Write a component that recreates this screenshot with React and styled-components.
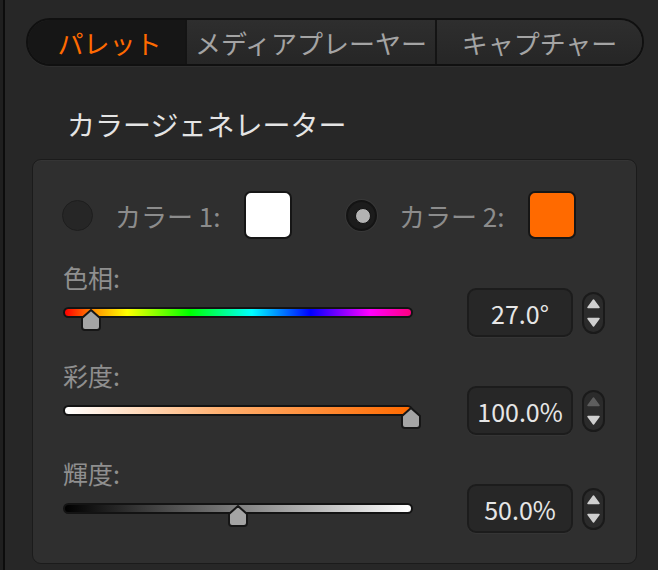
import styled, { createGlobalStyle } from "styled-components";

const GlobalStyle = createGlobalStyle`
  html, body {
    margin: 0;
    padding: 0;
    background: #272727;
  }
  body {
    font-family: "Noto Sans CJK JP", "Noto Sans", sans-serif;
  }
  * {
    box-sizing: border-box;
  }
`;

const Frame = styled.div`
  display: flex;
  width: 658px;
  height: 570px;
  background: #1f1f1f;
  overflow: hidden;
`;

const Main = styled.div`
  flex: 1;
  margin-left: 3px;
  border-left: 2px solid #0c0c0c;
  background: #272727;
  padding: 18px 14px 0 21px;
`;

const TabBar = styled.div`
  display: flex;
  width: 618px;
  height: 48px;
  border: 2px solid #101010;
  border-radius: 24px;
  overflow: hidden;
  box-shadow: 0 1px 0 rgba(255, 255, 255, 0.04);
`;

const Tab = styled.div`
  width: ${({ $w }) => $w}px;
  display: flex;
  align-items: center;
  justify-content: center;
  font-size: 26px;
  color: ${({ $active }) => ($active ? "#ff6a00" : "#a4a4a4")};
  background: ${({ $active }) =>
    $active ? "#161616" : "linear-gradient(#2e2e2e, #262626)"};
  border-left: ${({ $first }) => ($first ? "none" : "2px solid #141414")};
  padding-left: ${({ $first }) => ($first ? "6px" : "0")};
  white-space: nowrap;
`;

const Heading = styled.h2`
  margin: 40px 0 0 41px;
  font-size: 28px;
  font-weight: 400;
  line-height: 36px;
  color: #e4e4e4;
`;

const Panel = styled.div`
  margin: 17px 0 0 6px;
  width: 605px;
  height: 405px;
  border: 1px solid #1b1b1b;
  border-radius: 9px;
  background: #2f2f2f;
  padding: 31px 0 0 30px;
  box-shadow: inset 0 1px 0 rgba(255, 255, 255, 0.03);
`;

const ColorRow = styled.div`
  display: grid;
  grid-template-columns: 284px auto;
  align-items: center;
  height: 48px;
`;

const ColorOption = styled.div`
  display: flex;
  align-items: center;
`;

const Radio = styled.div`
  position: relative;
  width: 31px;
  height: 31px;
  border-radius: 50%;
  margin-left: -1px;
  background: ${({ $checked }) => ($checked ? "#1c1c1c" : "#262626")};
  border: ${({ $checked }) =>
    $checked ? "2px solid #141414" : "1px solid #1e1e1e"};
  box-shadow: ${({ $checked }) =>
    $checked ? "0 0 0 1px #383838" : "none"};

  &::after {
    content: "";
    display: ${({ $checked }) => ($checked ? "block" : "none")};
    position: absolute;
    left: 50%;
    top: 50%;
    width: 14px;
    height: 14px;
    margin: -7px 0 0 -7px;
    border-radius: 50%;
    background: #b3b3b3;
    border: 1px solid #111;
  }
`;

const ColorLabel = styled.span`
  margin-left: 22px;
  font-size: 26px;
  color: #8c8c8c;
  white-space: nowrap;
`;

const Swatch = styled.div`
  margin-left: 24px;
  width: 48px;
  height: 48px;
  border-radius: 7px;
  border: 2px solid #161616;
  background: ${({ $color }) => $color};
`;

const Section = styled.div`
  margin-top: 28px;
`;

const SliderLabel = styled.div`
  font-size: 25px;
  line-height: 21px;
  height: 21px;
  color: #8f8f8f;
`;

const ControlRow = styled.div`
  display: flex;
  align-items: center;
  height: 49px;
`;

const Track = styled.div`
  position: relative;
  width: 350px;
  height: 11px;
  border: 2px solid #131313;
  border-radius: 6px;
  background: ${({ $gradient }) => $gradient};
`;

const Thumb = styled.svg`
  position: absolute;
  top: 0;
  width: 20px;
  height: 22px;
  overflow: visible;
`;

const ValueBox = styled.div`
  margin-left: 54px;
  width: 106px;
  height: 49px;
  border: 2px solid #1c1c1c;
  border-radius: 9px;
  background: #272727;
  display: flex;
  align-items: center;
  justify-content: center;
  font-size: 25px;
  color: #e6e6e6;
  box-shadow: 0 1px 0 rgba(255, 255, 255, 0.03);
`;

const Spinner = styled.div`
  margin-left: 9px;
  width: 23px;
  height: 42px;
  border: 2px solid #1a1a1a;
  border-radius: 12px;
  background: #2b2b2b;
  display: flex;
  align-items: center;
  justify-content: center;
`;

const HUE =
  "linear-gradient(to right, #ff0000 0%, #ff9900 9%, #ffff00 18%, #00ff00 36%, #00ffff 54%, #0000ff 71%, #ff00ff 88%, #ff0080 100%)";
const SAT = "linear-gradient(to right, #ffffff, #ffb070 45%, #ff6a00)";
const LUM = "linear-gradient(to right, #000000, #7f7f7f 50%, #ffffff)";

const sliders = [
  { label: "色相:", value: "27.0°", pct: 27 / 360, gradient: HUE, upOff: false },
  { label: "彩度:", value: "100.0%", pct: 1, gradient: SAT, upOff: true },
  { label: "輝度:", value: "50.0%", pct: 0.5, gradient: LUM, upOff: false },
];

const Arrows = ({ upOff }) => (
  <svg width="19" height="38" viewBox="0 0 19 38">
    <path
      d="M9.5 6 L15 13.5 H4 Z"
      fill={upOff ? "#5e5e5e" : "#cfcfcf"}
      stroke={upOff ? "#5e5e5e" : "#cfcfcf"}
      strokeWidth="1.5"
      strokeLinejoin="round"
    />
    <path
      d="M4 24.5 H15 L9.5 32 Z"
      fill="#cfcfcf"
      stroke="#cfcfcf"
      strokeWidth="1.5"
      strokeLinejoin="round"
    />
  </svg>
);

const Slider = ({ label, value, pct, gradient, upOff }) => (
  <Section>
    <SliderLabel>{label}</SliderLabel>
    <ControlRow>
      <Track $gradient={gradient}>
        <Thumb viewBox="0 0 20 22" style={{ left: `${pct * 346 - 10}px` }}>
          <path
            d="M10 1 L19 9 V18 Q19 21 16 21 H4 Q1 21 1 18 V9 Z"
            fill="#a4a4a4"
            stroke="#161616"
            strokeWidth="2"
            strokeLinejoin="round"
          />
        </Thumb>
      </Track>
      <ValueBox>{value}</ValueBox>
      <Spinner>
        <Arrows upOff={upOff} />
      </Spinner>
    </ControlRow>
  </Section>
);

export default function App() {
  return (
    <Frame>
      <GlobalStyle />
      <Main>
        <TabBar>
          <Tab $w={157} $first $active>
            パレット
          </Tab>
          <Tab $w={250}>メディアプレーヤー</Tab>
          <Tab $w={207}>キャプチャー</Tab>
        </TabBar>
        <Heading>カラージェネレーター</Heading>
        <Panel>
          <ColorRow>
            <ColorOption>
              <Radio />
              <ColorLabel>カラー 1:</ColorLabel>
              <Swatch $color="#ffffff" />
            </ColorOption>
            <ColorOption>
              <Radio $checked />
              <ColorLabel>カラー 2:</ColorLabel>
              <Swatch $color="#ff6a00" />
            </ColorOption>
          </ColorRow>
          {sliders.map((s) => (
            <Slider key={s.label} {...s} />
          ))}
        </Panel>
      </Main>
    </Frame>
  );
}
